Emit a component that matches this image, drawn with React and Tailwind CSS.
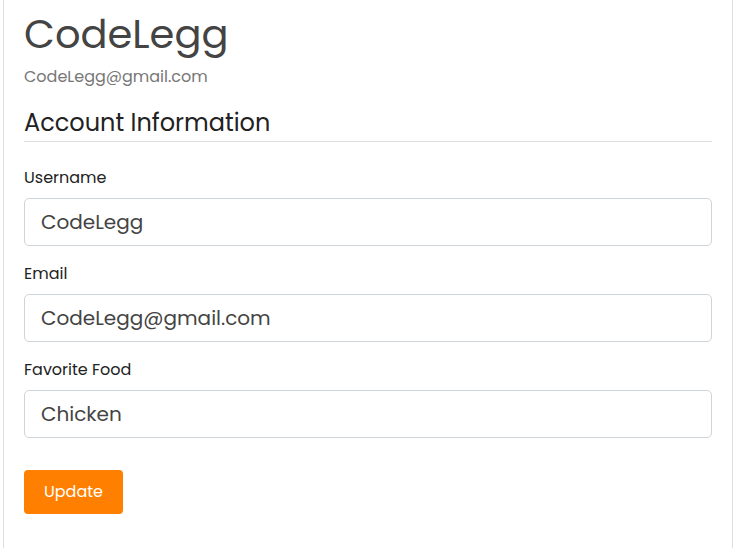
import React, { useState } from "react";

const font = { fontFamily: "Poppins, 'DejaVu Sans', sans-serif" };

function Field({ label, value, onChange }) {
    return (
        <div className="mt-[17px] first:mt-0">
            <label className="block text-[16px] leading-[22px] text-[#222]">
                {label}
            </label>
            <input
                className="mt-[9px] block w-full h-[48px] px-4 text-[20px] text-[#444] border border-[#ced4da] rounded-[5px] outline-none"
                value={value}
                onChange={(e) => onChange(e.target.value)}
            />
        </div>
    );
}

export default function App() {
    const [username, setUsername] = useState("CodeLegg");
    const [email, setEmail] = useState("CodeLegg@gmail.com");
    const [food, setFood] = useState("Chicken");

    return (
        <div className="min-h-screen bg-white" style={font}>
            <div className="ml-[3px] mr-[3px] min-h-[548px] border-x border-[#dddddd] bg-white px-5 pt-[6px] pb-8">
                <h1 className="text-[40px] leading-[56px] text-[#444] font-normal">
                    CodeLegg
                </h1>
                <p className="mt-[4px] text-[16px] leading-[22px] text-[#777]">
                    CodeLegg@gmail.com
                </p>

                <h2 className="mt-[18px] text-[24px] leading-[34px] text-[#222] font-normal">
                    Account Information
                </h2>
                <div className="mt-[1px] border-t border-[#dddddd]" />

                <div className="mt-[25px]">
                    <Field label="Username" value={username} onChange={setUsername} />
                    <Field label="Email" value={email} onChange={setEmail} />
                    <Field label="Favorite Food" value={food} onChange={setFood} />
                </div>

                <button className="mt-[32px] h-[44px] w-[99px] rounded-[4px] bg-[#ff7f00] text-[16px] text-white">
                    Update
                </button>
            </div>
        </div>
    );
}
